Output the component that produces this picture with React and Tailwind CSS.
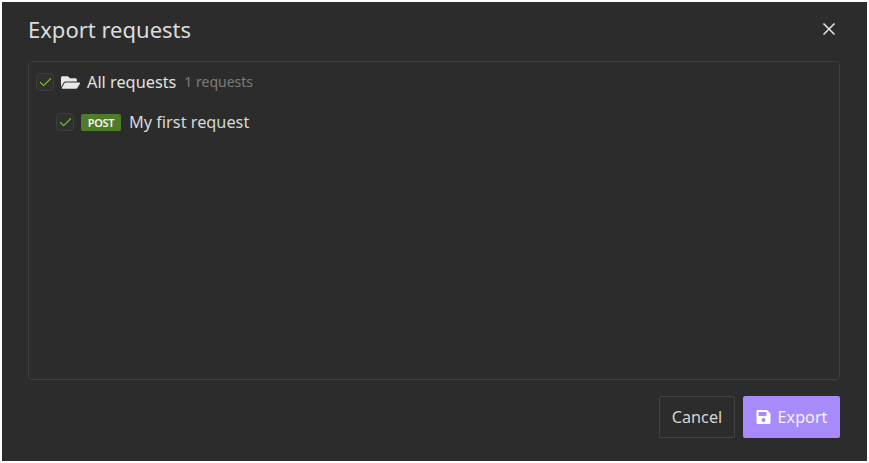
import React from "react";
import { X, Check } from "lucide-react";

function Box() {
  return (
    <span className="flex h-[18px] w-[18px] items-center justify-center rounded-[4px] border border-[#3d3d3d] bg-[#303030]">
      <Check className="h-[15px] w-[15px] shrink-0 text-[#6cc42a]" strokeWidth={1.9} />
    </span>
  );
}

export default function App() {
  return (
    <div className="h-[463px] w-[869px] bg-white p-[2px]" style={{ fontFamily: '"Noto Sans", sans-serif' }}>
      <div className="flex h-full flex-col bg-[#2c2c2c] pl-[26px] pr-[27px]">
        <div className="flex h-[59px] items-start justify-between">
          <h1 className="mt-[10px] text-[22px] leading-[34px] text-[#dcdcdc]">Export requests</h1>
          <X className="mr-[1px] mt-[17px] h-[20px] w-[20px] text-[#e4e4e4]" strokeWidth={2} />
        </div>
        <div className="h-[319px] rounded-[4px] border border-[#3e3e3e] pl-[7px] pt-[10px]">
          <div className="flex h-[20px] items-center">
            <Box />
            <svg viewBox="0 0 576 512" className="ml-[7px] h-[17px] w-[19px] fill-[#e8e8e8]">
              <path d="M572.694 292.093L500.27 416.248A63.997 63.997 0 0 1 444.989 448H45.025c-18.523 0-30.064-20.093-20.731-36.093l72.424-124.155A64 64 0 0 1 152 256h399.964c18.523 0 30.064 20.093 20.73 36.093zM152 224h328v-48c0-26.51-21.49-48-48-48H272l-64-64H48C21.49 64 0 85.49 0 112v278.046l69.077-118.418C86.214 242.25 117.989 224 152 224z" />
            </svg>
            <span className="ml-[7px] text-[16.3px] leading-[20px] text-[#e2e2e2]">All requests</span>
            <span className="ml-[8px] text-[14px] leading-[20px] text-[#7c7c7c]">1 requests</span>
          </div>
          <div className="mt-[20px] flex h-[20px] items-center pl-[20px]">
            <Box />
            <span className="ml-[7px] flex h-[17px] w-[40px] items-center justify-center rounded-[2px] bg-[#4f7c2a] text-[11px] font-semibold leading-none tracking-[-0.3px] text-[#f0f5ea]">POST</span>
            <span className="ml-[8px] text-[16.3px] leading-[20px] text-[#d8d8d8]">My first request</span>
          </div>
        </div>
        <div className="mt-[16px] flex justify-end gap-[8px]">
          <button className="h-[42px] w-[76px] rounded-[2px] border border-[#444444] text-[16.2px] text-[#d4d4d4]">Cancel</button>
          <button className="flex h-[42px] w-[97px] items-center justify-center gap-[7px] rounded-[2px] bg-[#a78bfa] text-[16.2px] text-[#f4f0ff]">
            <svg viewBox="0 0 448 512" className="h-[16px] w-[15px] fill-white">
              <path d="M433.941 129.941l-83.882-83.882A48 48 0 0 0 316.118 32H48C21.49 32 0 53.49 0 80v352c0 26.51 21.49 48 48 48h352c26.51 0 48-21.49 48-48V163.882a48 48 0 0 0-14.059-33.941zM224 416c-35.346 0-64-28.654-64-64 0-35.346 28.654-64 64-64s64 28.654 64 64c0 35.346-28.654 64-64 64zm96-304.520V212c0 6.627-5.373 12-12 12H76c-6.627 0-12-5.373-12-12V108c0-6.627 5.373-12 12-12h228.520c3.183 0 6.235 1.264 8.485 3.515l3.48 3.48A11.996 11.996 0 0 1 320 111.48z" />
            </svg>
            Export
          </button>
        </div>
      </div>
    </div>
  );
}
